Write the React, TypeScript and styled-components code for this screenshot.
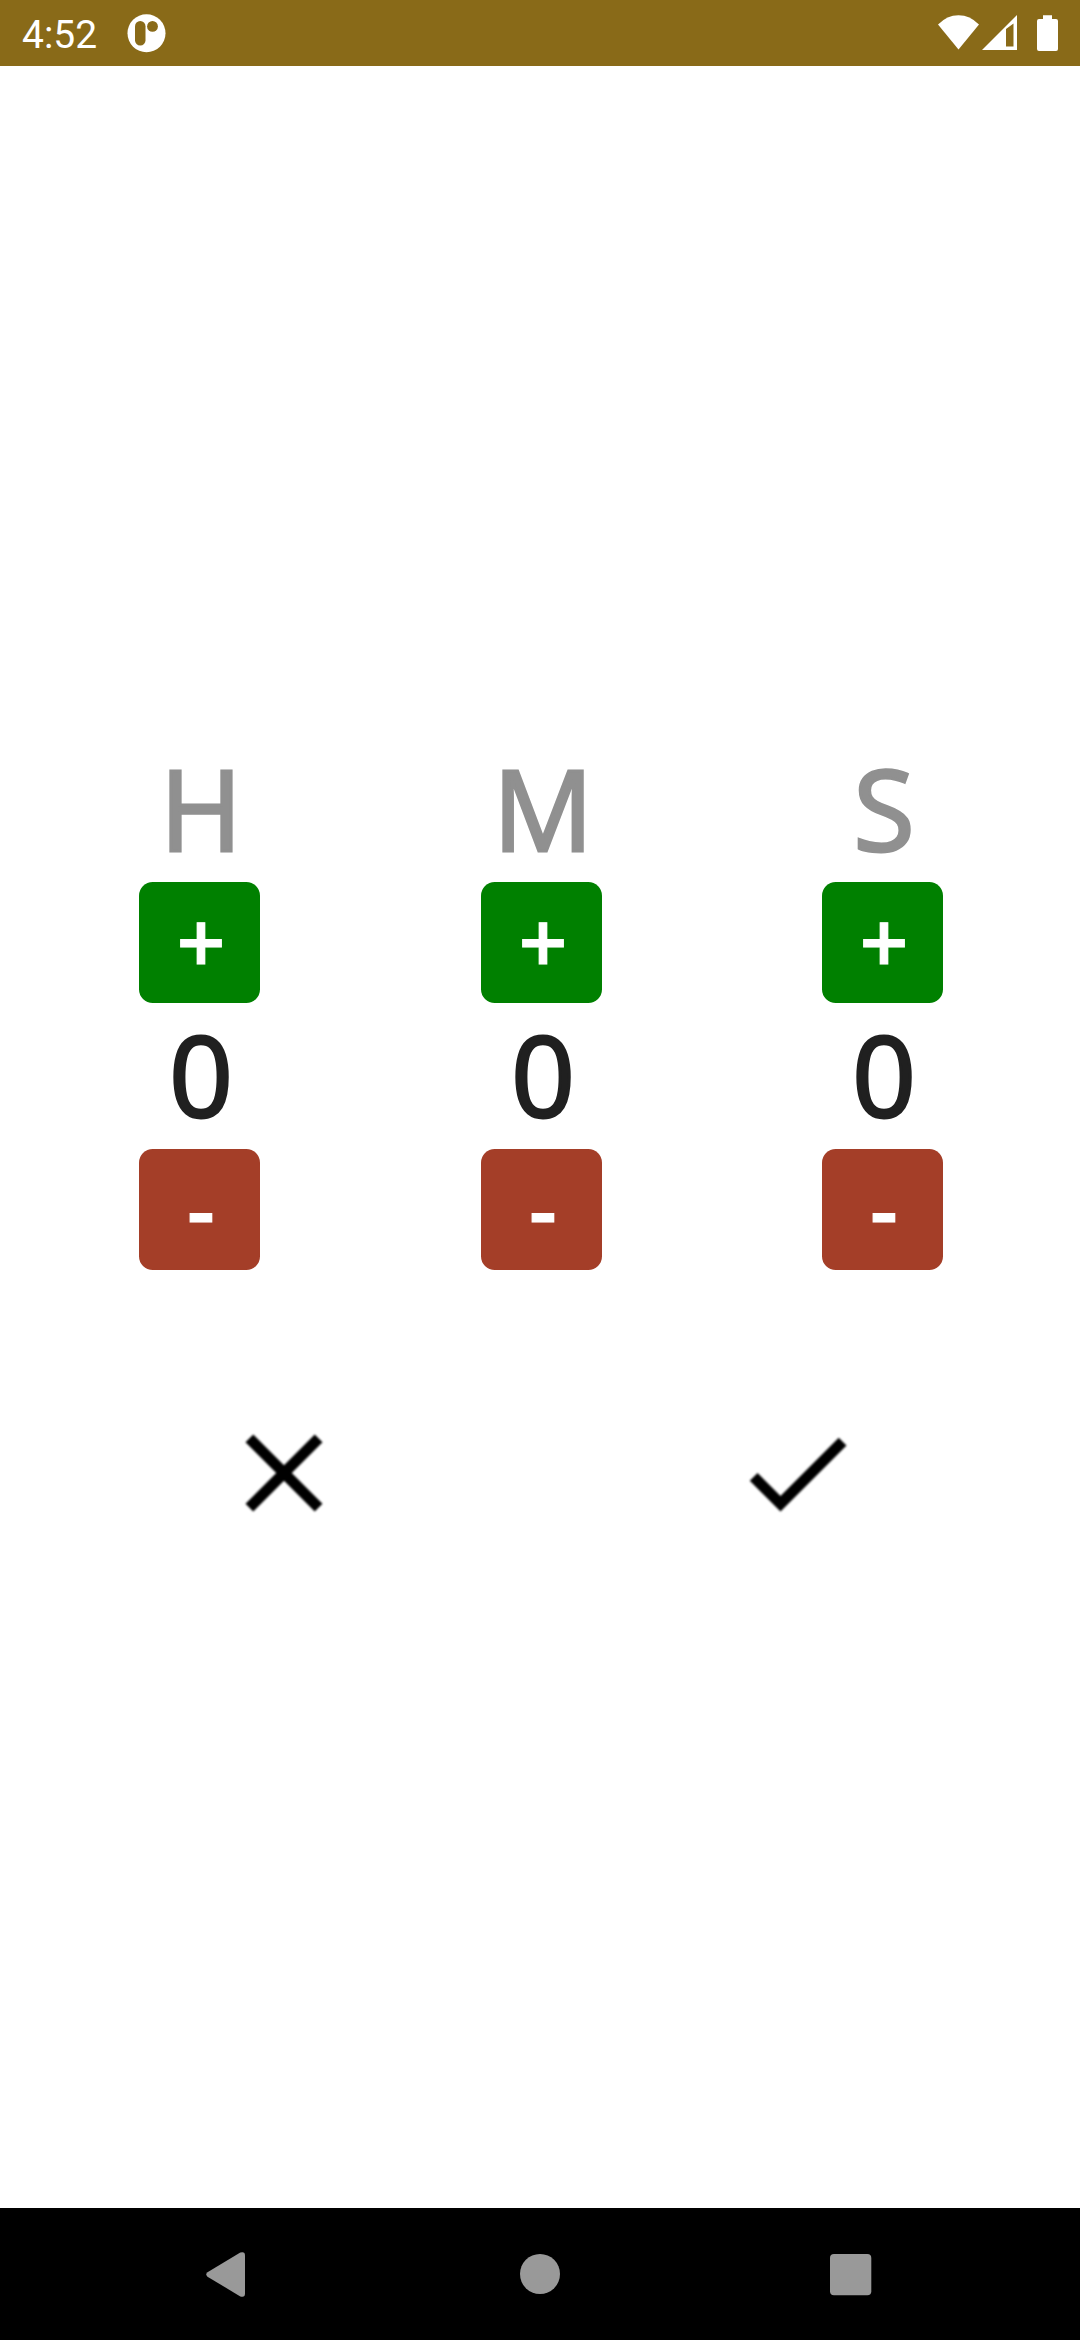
import React from "react";
import styled, { createGlobalStyle } from "styled-components";

const GlobalStyle = createGlobalStyle`
  * { box-sizing: border-box; }
  body { margin: 0; background: #fff; }
`;

const Screen = styled.div`
  display: flex;
  flex-direction: column;
  width: 1080px;
  height: 2340px;
  background: #fff;
  font-family: "Open Sans", "Noto Sans", sans-serif;
`;

const StatusBar = styled.header`
  display: flex;
  align-items: center;
  height: 66px;
  padding-left: 22px;
  background: #896a18;
`;

const Clock = styled.span`
  width: 105px;
  padding-top: 4px;
  font: 400 39px/46px Roboto, sans-serif;
  color: #fff;
`;

const Glyph = styled.svg`
  display: block;
  flex: none;
`;

const SystemIcons = styled(Glyph)`
  margin-left: auto;
`;

const Main = styled.main`
  flex: 1;
  padding-top: 674px;
`;

const Picker = styled.section`
  display: grid;
  grid-template-columns: 342px 341px 121px;
  padding-left: 139px;
`;

const Unit = styled.div`
  display: flex;
  flex-direction: column;
  width: 121px;
`;

const Label = styled.div<{ $color: string; $height: number; $line: number }>`
  display: flex;
  justify-content: center;
  height: ${(p) => p.$height}px;
  padding-left: 3px;
  font-size: 111.3px;
  line-height: ${(p) => p.$line}px;
  color: ${(p) => p.$color};
  -webkit-text-stroke: 3px ${(p) => p.$color};
`;

const StepButton = styled.button<{ $color: string }>`
  display: flex;
  align-items: center;
  justify-content: center;
  height: 121px;
  padding: 0 0 3px 3px;
  border: 0;
  border-radius: 13.75px;
  background: ${(p) => p.$color};
  color: #fff;
  font: 600 85px/118px "Open Sans", "Noto Sans", sans-serif;
  -webkit-text-stroke: 1.2px #fff;
`;

const Actions = styled.section`
  display: flex;
  gap: 381px;
  padding: 137px 0 0 218px;
`;

const IconButton = styled.button`
  width: 132px;
  height: 132px;
  padding: 0;
  border: 0;
  background: none;
`;

const SoftIcon = styled(Glyph)`
  filter: blur(1.1px);
`;

const NavBar = styled.nav`
  display: flex;
  align-items: center;
  height: 132px;
  background: #000;
`;

const NavIcon = styled(Glyph)<{ $left: number }>`
  margin-left: ${(p) => p.$left}px;
  fill: #999;
`;

const units = ["H", "M", "S"];

export default function App() {
  return (
    <Screen>
      <GlobalStyle />
      <StatusBar>
        <Clock>4:52</Clock>
        <Glyph width="40" height="66" viewBox="127 0 40 66">
          <circle cx="146.5" cy="33.2" r="19" fill="#fff" />
          <rect x="135" y="21" width="10.5" height="24.5" rx="5.2" fill="#896a18" />
          <circle cx="152.5" cy="26.4" r="5.4" fill="#896a18" />
        </Glyph>
        <SystemIcons width="142" height="66" viewBox="938 0 142 66" fill="#fff">
          <path d="M958.5 49.5 938 24.5Q947 15.2 958.5 15.2T979 24.5Z" />
          <path fillRule="evenodd" d="M982 50 1017 15V50ZM1006 29V46.5H1013.5V23.5Z" />
          <path d="M1043 15.3H1052V19H1056Q1058 19 1058 21V49Q1058 51 1056 51H1039Q1037 51 1037 49V21Q1037 19 1039 19H1043Z" />
        </SystemIcons>
      </StatusBar>
      <Main>
        <Picker>
          {units.map((unit) => (
            <Unit key={unit}>
              <Label $color="#909090" $height={142} $line={136}>{unit}</Label>
              <StepButton $color="#008000">+</StepButton>
              <Label $color="#202020" $height={146} $line={143}>0</Label>
              <StepButton $color="#a43e28">-</StepButton>
            </Unit>
          ))}
        </Picker>
        <Actions>
          <IconButton aria-label="Cancel">
            <SoftIcon width="132" height="132" viewBox="0 0 24 24">
              <path d="M19 6.41 17.59 5 12 10.59 6.41 5 5 6.41 10.59 12 5 17.59 6.41 19 12 13.41 17.59 19 19 17.59 13.41 12z" />
            </SoftIcon>
          </IconButton>
          <IconButton aria-label="Confirm">
            <SoftIcon width="132" height="132" viewBox="0 0 24 24">
              <path d="M9 16.17 4.83 12 3.41 13.41 9 19 21 7 19.59 5.59z" />
            </SoftIcon>
          </IconButton>
        </Actions>
      </Main>
      <NavBar>
        <NavIcon $left={206} width="39" height="132" viewBox="206 2208 39 132">
          <path d="M207.5 2272.3 240.3 2252.6Q245 2251 245 2255.5V2293.5Q245 2298 240.3 2296.4L207.5 2276.7Q205 2274.5 207.5 2272.3Z" />
        </NavIcon>
        <NavIcon $left={275} width="40" height="132" viewBox="520 2208 40 132">
          <circle cx="540" cy="2274" r="20" />
        </NavIcon>
        <NavIcon $left={270} width="42" height="132" viewBox="830 2208 42 132">
          <rect x="830" y="2254" width="41.3" height="41.3" rx="4" />
        </NavIcon>
      </NavBar>
    </Screen>
  );
}
